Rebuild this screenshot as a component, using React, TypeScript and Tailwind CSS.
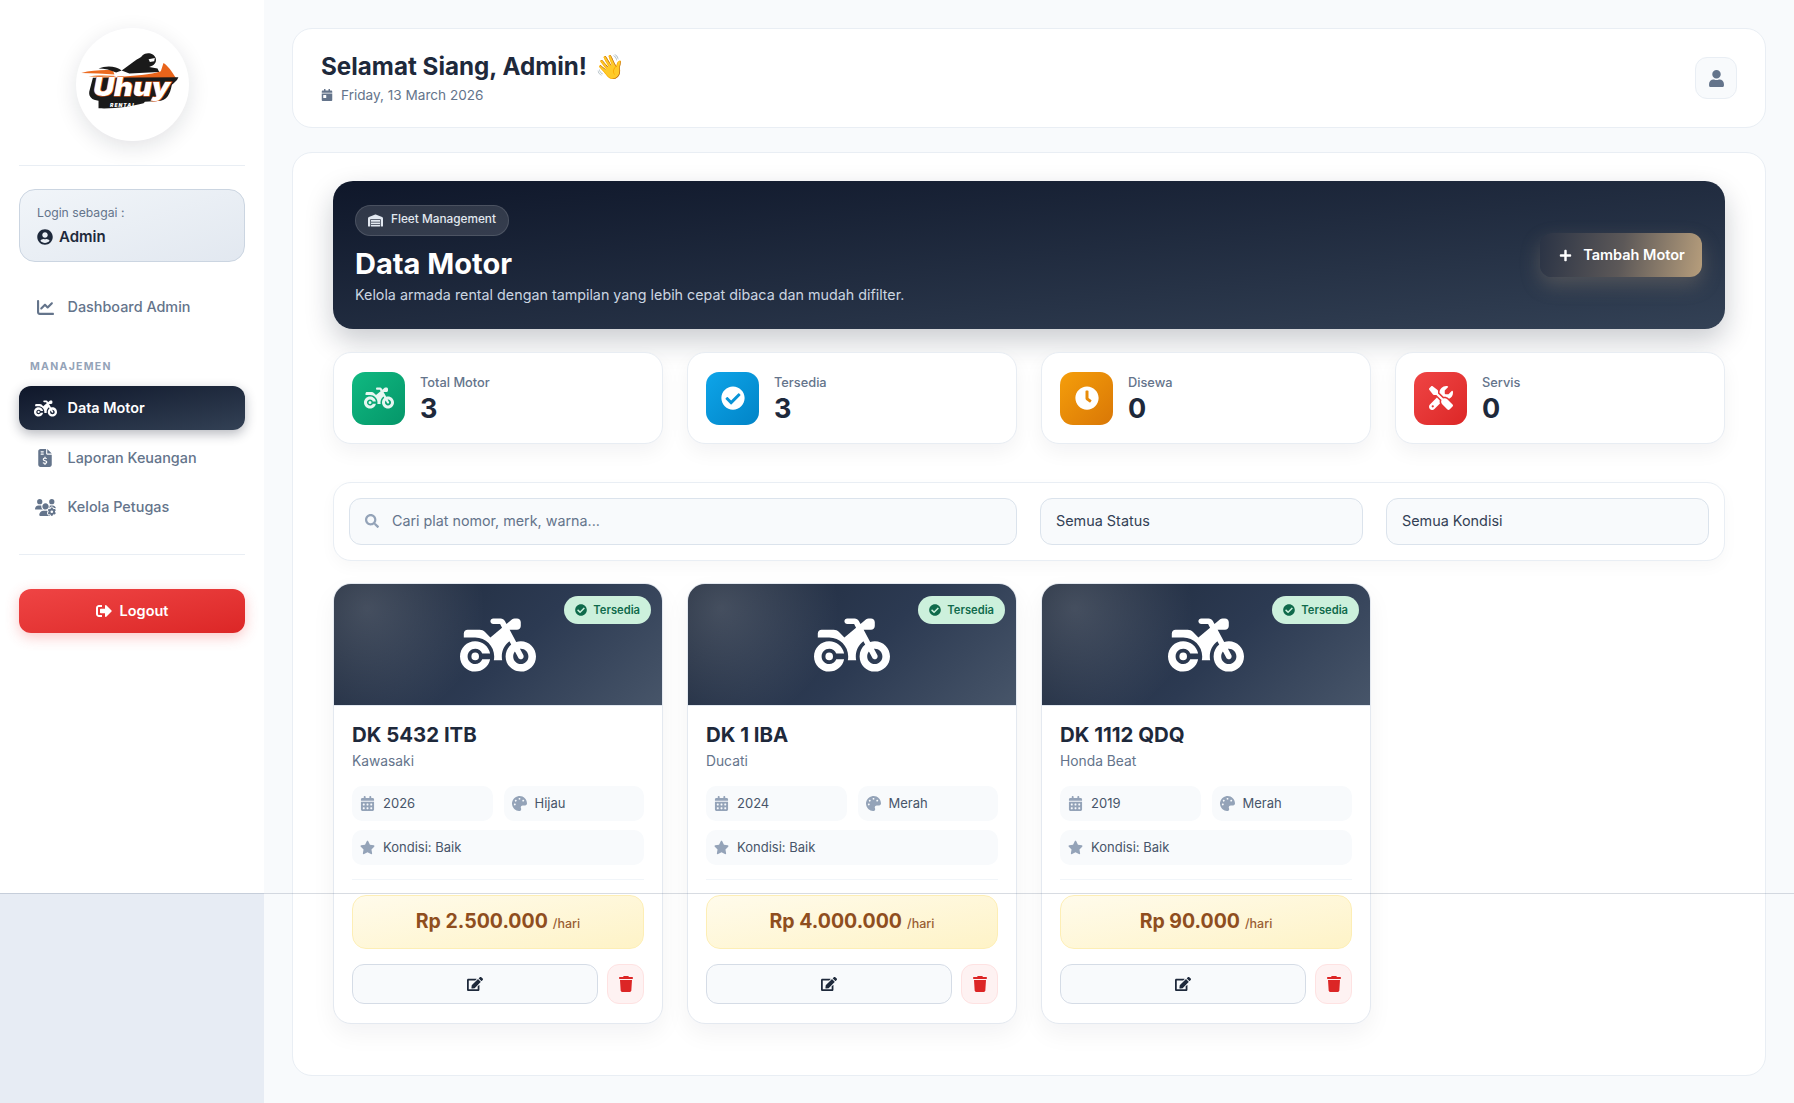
import React from "react";
import { FaSignOutAlt, FaEdit, FaCheckCircle, FaClock, FaSearch, FaPlus, FaStar, FaPalette, FaUserCircle, FaUser, FaCalendarDay } from "react-icons/fa";
import { FaMotorcycle, FaFileInvoiceDollar, FaUsersGear, FaChartLine, FaTrash, FaWarehouse, FaCalendarDays, FaScrewdriverWrench } from "react-icons/fa6";

function Logo() {
  return (
    <svg viewBox="240 150 300 175" className="w-[100px] h-[58px] -translate-x-[1px] -translate-y-[4px]">
      <path d="M240 213 C270 205 310 203 335 205 L340 218 C310 214 275 214 240 213Z" fill="#ec6a1f" />
      <path d="M262 224 C285 219 310 219 340 222 L335 232 C310 228 285 226 262 224Z" fill="#f39a5f" />
      <path d="M292 200 C315 190 345 192 362 206 L345 212 C330 205 310 200 292 200Z" fill="#1a1a1a" />
      <path d="M362 206 L400 178 C410 170 420 168 425 160 C435 150 460 152 465 170 C468 185 455 193 445 195 L470 200 L475 210 L385 215Z" fill="#1a1a1a" />
      <path d="M443 172 L462 168 L460 178 L447 180Z" fill="#fff" />
      <path d="M350 225 C400 222 450 218 480 208 L488 183 C500 190 515 210 525 228 L530 234 L350 240Z" fill="#e8641b" />
      <path d="M275 228 L533 226 C528 240 515 245 513 250 C508 275 500 297 470 298 L432 300 L428 305 C390 315 340 322 292 320 L292 297 C272 295 262 285 264 270Z" fill="#1a1a1a" />
      <text x="392" y="282" textAnchor="middle" fontFamily="Inter, sans-serif" fontStyle="italic" fontWeight="900" fontSize="78" fill="#fff" stroke="#e8641b" strokeWidth="3" paintOrder="stroke" textLength="232" lengthAdjust="spacingAndGlyphs">Uhuy</text>
      <text x="366" y="316" textAnchor="middle" fontFamily="Inter, sans-serif" fontStyle="italic" fontWeight="900" fontSize="15" fill="#fff" letterSpacing="3">RENTAL</text>
    </svg>
  );
}

function NavItem({ icon, label, active }: { icon: React.ReactNode; label: string; active?: boolean }) {
  return (
    <div className={active ? "flex items-center h-[44px] rounded-xl px-[14px] text-white font-semibold bg-gradient-to-br from-[#0f172a] to-[#334155] shadow-[0_4px_12px_rgba(15,23,42,0.3)]" : "flex items-center h-[44px] rounded-xl px-[14px] text-[#64748b] font-medium"}>
      <span className="w-[24px] flex justify-center text-[17px] shrink-0">{icon}</span>
      <span className="ml-[10.5px] text-[14.4px]">{label}</span>
    </div>
  );
}

function Stat({ icon, label, value, grad }: { icon: React.ReactNode; label: string; value: string; grad: string }) {
  return (
    <div className="h-[92px] rounded-[18px] bg-white border border-[#e8edf3] shadow-[0_8px_20px_rgba(15,23,42,0.05)] flex items-center px-[18px]">
      <div className={"w-[53px] h-[53px] rounded-[13px] flex items-center justify-center text-white text-[24px] " + grad}>{icon}</div>
      <div className="ml-[15px] pt-[4px]">
        <div className="text-[12.8px] leading-[16px] text-[#64748b] font-medium">{label}</div>
        <div className="mt-[1px] text-[27px] leading-[34px] font-bold text-[#1e293b]">{value}</div>
      </div>
    </div>
  );
}

function Chip({ icon, label, className }: { icon: React.ReactNode; label: string; className?: string }) {
  return (
    <div className={"h-[35px] rounded-[10px] bg-[#f8fafc] flex items-center px-[8px] text-[13px] text-[#475569] " + (className ?? "")}>
      <span className="text-[#94a3b8] text-[15px] w-[15px] flex justify-center shrink-0">{icon}</span>
      <span className="ml-[8px]">{label}</span>
    </div>
  );
}

function MotorCard({ plate, brand, year, color, price }: { plate: string; brand: string; year: string; color: string; price: string }) {
  return (
    <div className="rounded-[18px] bg-white border border-[#e4e9f0] shadow-[0_10px_24px_rgba(15,23,42,0.05)] overflow-hidden">
      <div className="relative h-[122px] flex items-center justify-center bg-[radial-gradient(circle_at_10%_20%,rgba(255,255,255,0.16),transparent_38%),linear-gradient(135deg,#1e293b_0%,#2c3a52_55%,#475569_100%)] border-b border-[#e2e8f0]">
        <FaMotorcycle className="text-white text-[76px]" />
        <div className="absolute top-[12px] right-[11px] h-[28px] px-[11px] rounded-full bg-[#ccf0dc] text-[#0f6a4b] flex items-center text-[11.2px] font-semibold">
          <FaCheckCircle className="text-[12px] mr-[6px]" />
          Tersedia
        </div>
      </div>
      <div className="px-[18px] pt-[15px] pb-[19px]">
        <div className="text-[20.4px] leading-[28px] font-bold text-[#1e293b]">{plate}</div>
        <div className="text-[13.8px] leading-[20px] mt-[2px] text-[#64748b]">{brand}</div>
        <div className="grid grid-cols-2 gap-[11px] mt-[15px]">
          <Chip icon={<FaCalendarDays />} label={year} />
          <Chip icon={<FaPalette />} label={color} />
        </div>
        <Chip icon={<FaStar />} label="Kondisi: Baik" className="mt-[9px]" />
        <div className="h-px bg-[#f1f5f9] mt-[14px]" />
        <div className="mt-[15px] h-[54px] rounded-[14px] border border-[#fdeeb5] bg-gradient-to-br from-[#fffbeb] to-[#fef3c7] flex items-baseline justify-center pt-[11px]">
          <span className="text-[19.5px] leading-[28px] font-bold text-[#8f4e1e]">{price}</span>
          <span className="ml-[5px] text-[12.5px] text-[#8f4e1e] opacity-90 font-medium">/hari</span>
        </div>
        <div className="flex mt-[15px] gap-[9px]">
          <div className="flex-1 h-[40px] rounded-[12px] bg-[#f8fafc] border border-[#d5dce6] flex items-center justify-center text-[#1e293b] text-[16px]"><FaEdit /></div>
          <div className="w-[37px] h-[40px] rounded-[12px] bg-[#fef2f2] border border-[#fee2e2] flex items-center justify-center text-[#dc2626] text-[16px]"><FaTrash /></div>
        </div>
      </div>
    </div>
  );
}

export default function App() {
  return (
    <div className="relative flex min-h-[1103px] bg-[#e7ecf4] font-['Inter',sans-serif] overflow-hidden">
      <aside className="w-[264px] h-[893px] shrink-0 bg-white px-[19px] pt-[28px]">
        <div className="w-[113px] h-[113px] mx-auto rounded-full bg-white shadow-[0_6px_22px_rgba(15,23,42,0.12)] flex items-center justify-center">
          <Logo />
        </div>
        <div className="h-px bg-[#e9eef4] mt-[24px]" />
        <div className="mt-[23px] h-[73px] rounded-[16px] border border-[#cbd5e1] bg-gradient-to-br from-[#f1f5f9] to-[#e2e8f0] px-[17px] pt-[14px]">
          <div className="text-[12.2px] leading-[18px] text-[#64748b]">Login sebagai :</div>
          <div className="flex items-center mt-[5px] text-[#1e293b]">
            <FaUserCircle className="text-[16px]" />
            <span className="ml-[6px] text-[15px] leading-[20px] font-semibold">Admin</span>
          </div>
        </div>
        <div className="mt-[23px]"><NavItem icon={<FaChartLine />} label="Dashboard Admin" /></div>
        <div className="mt-[31px] ml-[11px] text-[10.5px] leading-[14px] font-bold tracking-[1.3px] text-[#94a3b8]">MANAJEMEN</div>
        <div className="mt-[12px] flex flex-col gap-[5.5px]">
          <NavItem active icon={<FaMotorcycle className="text-[23px]" />} label="Data Motor" />
          <NavItem icon={<FaFileInvoiceDollar className="text-[18px]" />} label="Laporan Keuangan" />
          <NavItem icon={<FaUsersGear className="text-[21px]" />} label="Kelola Petugas" />
        </div>
        <div className="h-px bg-[#e9eef4] mt-[25px]" />
        <div className="mt-[34px] h-[44px] rounded-xl bg-gradient-to-br from-[#ef4444] to-[#dc2626] shadow-[0_4px_14px_rgba(239,68,68,0.3)] text-white font-semibold text-[14.5px] flex items-center justify-center">
          <FaSignOutAlt className="text-[16px] mr-[8px]" />
          Logout
        </div>
      </aside>

      <main className="flex-1 bg-[#f8fafc] pt-[28px] pl-[28px] pr-[28px] pb-[28px]">
        <header className="h-[100px] rounded-[20px] bg-white border border-[#e9eef4] flex items-center justify-between px-[28px]">
          <div className="pb-[1px]">
            <div className="flex items-center text-[24.2px] leading-[34px] font-bold text-[#1e293b]">
              Selamat Siang, Admin!
              <span className="ml-[8px] text-[24px] leading-[30px]">👋</span>
            </div>
            <div className="flex items-center mt-[1px] text-[13.6px] leading-[20px] text-[#64748b]">
              <FaCalendarDay className="text-[12px]" />
              <span className="ml-[8px]">Friday, 13 March 2026</span>
            </div>
          </div>
          <div className="w-[42px] h-[42px] rounded-[12px] bg-[#f8fafc] border border-[#e9eef4] flex items-center justify-center text-[#64748b] text-[17px]"><FaUser /></div>
        </header>

        <section className="mt-[24px] h-[924px] rounded-[20px] bg-white border border-[#e9eef4] pt-[28px] px-[40px]">
          <div className="h-[148px] rounded-[20px] bg-gradient-to-br from-[#0f172a] to-[#334155] shadow-[0_12px_28px_rgba(15,23,42,0.22)] flex items-center justify-between pl-[22px] pr-[23px]">
            <div>
              <div className="inline-flex items-center h-[31px] px-[12px] rounded-full bg-[rgba(255,255,255,0.13)] border border-[rgba(255,255,255,0.12)] text-[#e2e8f0] text-[11.8px] font-medium">
                <FaWarehouse className="text-[15px]" />
                <span className="ml-[8px]">Fleet Management</span>
              </div>
              <div className="mt-[9px] text-[29px] leading-[38px] font-bold text-white">Data Motor</div>
              <div className="mt-[1px] text-[14.3px] leading-[22px] text-[#cbd5e1]">Kelola armada rental dengan tampilan yang lebih cepat dibaca dan mudah difilter.</div>
            </div>
            <div className="h-[44px] w-[162px] rounded-[12px] pl-[2px] bg-[linear-gradient(100deg,#2a3345_0%,#5c5858_50%,#b79e7c_100%)] shadow-[0_8px_20px_rgba(183,158,124,0.28)] text-white font-semibold text-[14.5px] flex items-center justify-center">
              <FaPlus className="text-[13px] mr-[11px]" />
              Tambah Motor
            </div>
          </div>

          <div className="grid grid-cols-4 gap-[24px] mt-[23px]">
            <Stat icon={<FaMotorcycle className="text-[30px] opacity-90" />} label="Total Motor" value="3" grad="bg-gradient-to-br from-[#10b981] to-[#059669]" />
            <Stat icon={<FaCheckCircle />} label="Tersedia" value="3" grad="bg-gradient-to-br from-[#0ea5e9] to-[#0284c7]" />
            <Stat icon={<FaClock />} label="Disewa" value="0" grad="bg-gradient-to-br from-[#f59e0b] to-[#d97706]" />
            <Stat icon={<FaScrewdriverWrench />} label="Servis" value="0" grad="bg-gradient-to-br from-[#ef4444] to-[#dc2626]" />
          </div>

          <div className="mt-[38px] h-[79px] rounded-[18px] bg-white border border-[#e9eef4] shadow-[0_6px_16px_rgba(15,23,42,0.03)] grid grid-cols-[1fr_323px_323px] gap-[23px] items-center px-[15px]">
            <div className="h-[47px] rounded-[12px] bg-[#f8fafc] border border-[#dbe3ec] flex items-center px-[15px] pb-[1px] text-[14.3px] text-[#64748b]">
              <FaSearch className="text-[14px] text-[#94a3b8]" />
              <span className="ml-[13px]">Cari plat nomor, merk, warna...</span>
            </div>
            <div className="h-[47px] rounded-[12px] bg-[#f8fafc] border border-[#dbe3ec] flex items-center px-[15px] pb-[1px] text-[14.4px] text-[#334155]">Semua Status</div>
            <div className="h-[47px] rounded-[12px] bg-[#f8fafc] border border-[#dbe3ec] flex items-center px-[15px] pb-[1px] text-[14.4px] text-[#334155]">Semua Kondisi</div>
          </div>

          <div className="grid grid-cols-4 gap-[24px] mt-[22px]">
            <MotorCard plate="DK 5432 ITB" brand="Kawasaki" year="2026" color="Hijau" price="Rp 2.500.000" />
            <MotorCard plate="DK 1 IBA" brand="Ducati" year="2024" color="Merah" price="Rp 4.000.000" />
            <MotorCard plate="DK 1112 QDQ" brand="Honda Beat" year="2019" color="Merah" price="Rp 90.000" />
          </div>
        </section>
      </main>

      <div className="absolute left-0 right-0 top-[893px] h-px bg-[rgba(100,116,139,0.25)]" />
    </div>
  );
}
